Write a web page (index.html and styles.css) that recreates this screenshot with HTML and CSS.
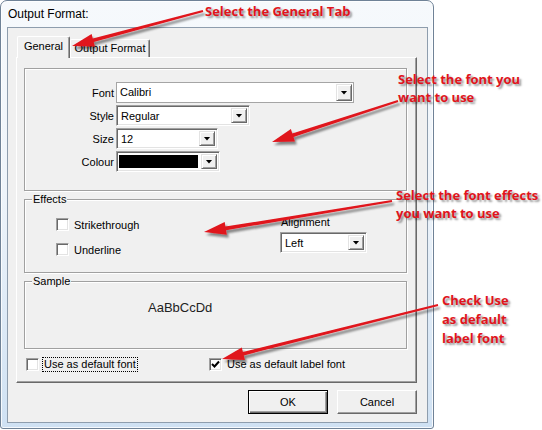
FILE: index.html
```html
<!DOCTYPE html>
<html>
<head>
    <title>Output Format</title>
    <link rel="stylesheet" href="styles.css">
</head>
<body>
    <div class="window">
        <div class="titlebar">Output Format:</div>
        <div class="client">
            <div class="tabs">
                <div class="tab active">General</div>
                <div class="tab">Output Format</div>
            </div>
            <div class="tab-panel">
                <div class="group font-group">
                    <label class="field-label">Font</label>
                    <div class="combo flat font-combo"><span class="combo-text">Calibri</span><span class="drop"></span></div>
                    <label class="field-label">Style</label>
                    <div class="combo style-combo"><span class="combo-text">Regular</span><span class="drop"></span></div>
                    <label class="field-label">Size</label>
                    <div class="combo size-combo"><span class="combo-text">12</span><span class="drop"></span></div>
                    <label class="field-label">Colour</label>
                    <div class="combo colour-combo"><span class="swatch"></span><span class="drop"></span></div>
                </div>

                <fieldset class="group effects">
                    <legend>Effects</legend>
                    <div class="effects-body">
                        <div class="check-list">
                            <div class="check"><span class="box"></span>Strikethrough</div>
                            <div class="check"><span class="box"></span>Underline</div>
                        </div>
                        <div class="align">
                            <div class="align-label">Alignment</div>
                            <div class="combo align-combo"><span class="combo-text">Left</span><span class="drop"></span></div>
                        </div>
                    </div>
                </fieldset>

                <fieldset class="group sample">
                    <legend>Sample</legend>
                    <div class="sample-text">AaBbCcDd</div>
                </fieldset>

                <div class="defaults">
                    <div class="check default-font"><span class="box"></span><span class="check-label focused">Use as default font</span></div>
                    <div class="check"><span class="box"><svg width="9" height="9" viewBox="0 0 9 9"><path d="M1 4 L3.5 6.5 L8 1.5" fill="none" stroke="#000" stroke-width="2"/></svg></span><span class="check-label">Use as default label font</span></div>
                </div>
            </div>
            <div class="buttons">
                <button class="btn default">OK</button>
                <button class="btn">Cancel</button>
            </div>
        </div>
    </div>

    <svg class="arrows" width="542" height="430" viewBox="0 0 542 430">
        <defs>
            <filter id="shadow" filterUnits="userSpaceOnUse" x="0" y="0" width="542" height="430">
                <feDropShadow dx="2" dy="3" stdDeviation="1.3" flood-color="#000" flood-opacity="0.45"/>
            </filter>
        </defs>
        <g filter="url(#shadow)" fill="#e0141c">
            <polygon points="202.7,10 92.8,38.6 91.6,34 72,46 94.9,46.6 93.7,42.1 203.3,12"/>
            <polygon points="397.7,100 292.3,133.5 290.9,129 272,142 294.9,141.4 293.5,136.9 398.3,102"/>
            <polygon points="391.8,200 225.4,226.6 224.7,222 204,232 226.8,234.8 226,230.2 392.2,202"/>
            <polygon points="437.8,304 242.9,351.9 241.8,347.4 222,359 244.9,360 243.8,355.4 438.2,306"/>
        </g>
    </svg>

    <div class="note note-tab">Select the General Tab</div>
    <div class="note note-font">Select the font you<br>want to use</div>
    <div class="note note-effects">Select the font effects<br>you want to use</div>
    <div class="note note-default">Check Use<br>as default<br>label font</div>
</body>
</html>
```

FILE: styles.css
```css
body {
    margin: 0;
    width: 542px;
    height: 430px;
    overflow: hidden;
    position: relative;
    background: #fff;
    font-family: "Liberation Sans", Arial, sans-serif;
    font-size: 11px;
    color: #000;
}

/* window frame */
.window {
    box-sizing: border-box;
    width: 434px;
    height: 429px;
    padding: 0 5px 5px 6px;
    border: 1px solid #6f8297;
    border-radius: 7px 7px 3px 3px;
    background: linear-gradient(180deg, #f6f9fc 0%, #eef4fa 45%, #cfe1f3 100%);
    box-shadow: inset 0 0 0 1px rgba(255,255,255,0.8);
}
.titlebar {
    height: 26px;
    line-height: 26px;
    padding-left: 1px;
    font-size: 12px;
    color: #000;
}
.client {
    box-sizing: border-box;
    height: 396px;
    padding: 8px 10px 8px 8px;
    border: 1px solid #8e9dad;
    background: #f0f0f0;
}

/* tabs */
.tabs {
    display: flex;
    align-items: flex-end;
    height: 21px;
    padding-left: 1px;
}
.tab {
    box-sizing: border-box;
    height: 18px;
    line-height: 16px;
    padding: 0 3px;
    text-align: center;
    border: 1px solid;
    border-color: #fff #696969 transparent #fff;
    border-bottom: none;
    border-radius: 2px 2px 0 0;
    box-shadow: inset -1px 0 0 #a0a0a0;
}
.tab.active {
    position: relative;
    z-index: 1;
    width: 53px;
    height: 22px;
    line-height: 18px;
    margin-bottom: -1px;
    background: #f0f0f0;
}
.tab:not(.active) {
    width: 80px;
}
.tab-panel {
    box-sizing: border-box;
    width: 401px;
    height: 326px;
    padding: 0 0 0 7px;
    border: 1px solid;
    border-color: #fff #696969 #696969 #fff;
    box-shadow: inset -1px -1px 0 #a0a0a0;
    overflow: hidden;
}

/* group boxes */
.group {
    box-sizing: border-box;
    width: 383px;
    margin: 0;
    border: 1px solid #a0a0a0;
    box-shadow: 1px 1px 0 #fff, inset 1px 1px 0 #fff;
}
.group legend {
    margin-left: 7px;
    padding: 0 1px;
    line-height: 13px;
    background: #f0f0f0;
}
.font-group {
    display: grid;
    grid-template-columns: 89px auto;
    grid-auto-rows: 21px;
    row-gap: 2px;
    column-gap: 2px;
    align-items: center;
    justify-items: start;
    height: 123px;
    margin-top: 10px;
    padding-top: 13px;
}
.field-label {
    justify-self: end;
}

/* combo boxes */
.combo {
    box-sizing: border-box;
    display: flex;
    height: 21px;
    padding: 2px;
    background: #fff;
    border: 1px solid;
    border-color: #a0a0a0 #fff #fff #a0a0a0;
    box-shadow: inset 1px 1px 0 #696969, inset -1px -1px 0 #e3e3e3;
}
.combo.flat {
    padding: 1px;
    border-color: #a5a5a5;
    box-shadow: none;
}
.combo-text {
    flex: 1;
    line-height: 17px;
    padding-left: 2px;
}
.drop {
    box-sizing: border-box;
    width: 16px;
    display: flex;
    align-items: center;
    justify-content: center;
    background: #f0f0f0;
    border: 1px solid;
    border-color: #e3e3e3 #696969 #696969 #e3e3e3;
    box-shadow: inset 1px 1px 0 #fff, inset -1px -1px 0 #a0a0a0;
}
.drop::after {
    content: "";
    width: 7px;
    height: 4px;
    background: #000;
    clip-path: polygon(0 0, 100% 0, 50% 100%);
}
.font-combo { width: 238px; }
.style-combo { width: 134px; }
.size-combo { width: 102px; }
.colour-combo { width: 104px; }
.align-combo { width: 87px; }
.swatch {
    flex: 1;
    margin: 1px 3px 1px 0;
    background: #000;
}

/* effects */
.effects {
    height: 80px;
    margin-top: 2px;
    padding: 0;
}
.effects-body {
    display: flex;
    padding-left: 31px;
}
.check-list {
    width: 224px;
    padding-top: 12px;
    display: flex;
    flex-direction: column;
    gap: 12px;
}
.check {
    display: flex;
    align-items: center;
    height: 13px;
}
.box {
    box-sizing: border-box;
    width: 13px;
    height: 13px;
    margin-right: 5px;
    display: flex;
    align-items: center;
    justify-content: center;
    background: #fff;
    border: 1px solid;
    border-color: #a0a0a0 #fff #fff #a0a0a0;
    box-shadow: inset 1px 1px 0 #696969, inset -1px -1px 0 #e3e3e3;
}
.align-label {
    padding-top: 10px;
    padding-left: 1px;
    line-height: 13px;
}
.align-combo {
    margin-top: 3px;
}

/* sample */
.sample {
    height: 74px;
    margin-top: 2px;
    padding: 0;
}
.sample-text {
    padding: 12px 0 0 123px;
    font-size: 13px;
    line-height: 15px;
    color: #222;
}

/* bottom check boxes */
.defaults {
    display: flex;
    align-items: center;
    height: 15px;
    margin-top: 8px;
    padding-left: 2px;
}
.defaults .check {
    height: 15px;
}
.defaults .box {
    margin-right: 3px;
}
.default-font {
    width: 183px;
}
.check-label {
    padding: 0 1px;
    line-height: 13px;
    border: 1px dotted transparent;
}
.check-label.focused {
    border-color: #000;
}

/* buttons */
.buttons {
    display: flex;
    justify-content: flex-end;
    gap: 9px;
    margin-top: 7px;
}
.btn {
    box-sizing: border-box;
    width: 80px;
    height: 24px;
    padding: 0;
    font-family: "Liberation Sans", Arial, sans-serif;
    font-size: 11px;
    color: #000;
    background: #f0f0f0;
    border: 1px solid;
    border-color: #fff #696969 #696969 #fff;
    box-shadow: inset -1px -1px 0 #a0a0a0;
}
.btn.default {
    border-color: #000;
    box-shadow: inset 1px 1px 0 #fff, inset -1px -1px 0 #696969, inset -2px -2px 0 #a0a0a0;
}

/* annotations */
.arrows {
    position: absolute;
    left: 0;
    top: 0;
}
.note {
    position: absolute;
    font-family: "Open Sans", "Noto Sans", sans-serif;
    font-weight: bold;
    font-size: 13px;
    line-height: 18px;
    color: #e0141c;
    text-shadow: 2px 2px 2px rgba(0,0,0,0.4);
    white-space: nowrap;
}
.note-tab { left: 205px; top: 2px; }
.note-font { left: 398px; top: 70px; }
.note-effects { left: 396px; top: 186px; }
.note-default { left: 442px; top: 291px; line-height: 19px; }
```
